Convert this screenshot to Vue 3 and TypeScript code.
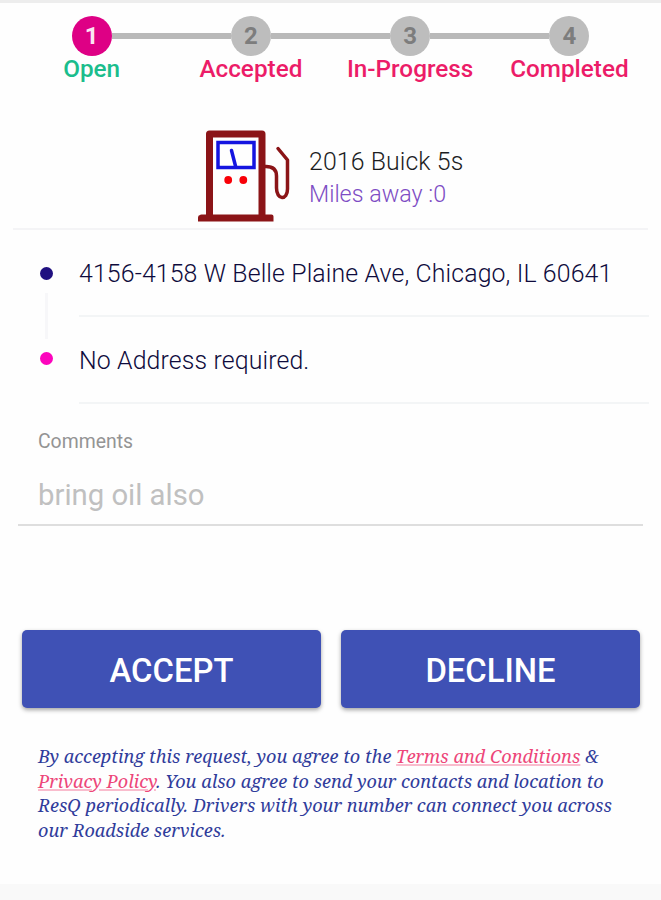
<script setup lang="ts">
interface Step {
  id: number
  label: string
  active: boolean
}

const steps: Step[] = [
  { id: 1, label: 'Open', active: true },
  { id: 2, label: 'Accepted', active: false },
  { id: 3, label: 'In-Progress', active: false },
  { id: 4, label: 'Completed', active: false },
]
</script>

<template>
  <main class="screen">
    <ol class="stepper">
      <li v-for="step in steps" :key="step.id" class="step" :class="{ active: step.active }">
        <div class="track">
          <span class="rail"></span>
          <span class="circle">{{ step.id }}</span>
          <span class="rail"></span>
        </div>
        <span class="step-label">{{ step.label }}</span>
      </li>
    </ol>

    <section class="vehicle">
      <svg class="pump" width="94" height="94" viewBox="0 0 94 94" fill="none">
        <path d="M11.500 88V5H64V88" stroke="#8b1417" stroke-width="7" stroke-linejoin="round" />
        <path d="M2 86Q2 85.500 3.500 85.500H73.500Q75.500 85.500 75.500 87.500V92.500H0V88.500Q0 86 2 86Z" fill="#8b1417" />
        <path d="M64 37.500H68C75 37.500 78.500 41 78.500 47V59C78.500 71.500 89.500 71.500 89.500 60V31L80 19.500" stroke="#8b1417" stroke-width="3.500" stroke-linejoin="round" stroke-linecap="round" />
        <rect x="20" y="13.500" width="36" height="25" stroke="#1414e0" stroke-width="3.500" />
        <path d="M33.500 21.500L37.500 37" stroke="#1414e0" stroke-width="3.500" stroke-linecap="round" />
        <circle cx="30.200" cy="51" r="3.900" fill="#f80008" />
        <circle cx="45.300" cy="51" r="3.900" fill="#f80008" />
      </svg>
      <div class="vehicle-text">
        <h1>2016 Buick 5s</h1>
        <p>Miles away :0</p>
      </div>
    </section>

    <section class="route">
      <div class="markers">
        <span class="dot from"></span>
        <span class="connector"></span>
        <span class="dot to"></span>
      </div>
      <div class="stops">
        <div class="stop pickup"><span>4156-4158 W Belle Plaine Ave, Chicago, IL 60641</span></div>
        <div class="stop dropoff"><span>No Address required.</span></div>
      </div>
    </section>

    <section class="comments">
      <label for="comments">Comments</label>
      <input id="comments" type="text" placeholder="bring oil also" />
    </section>

    <div class="actions">
      <button type="button">ACCEPT</button>
      <button type="button">DECLINE</button>
    </div>

    <p class="terms">
      <span class="line">By accepting this request, you agree to the <a>Terms and Conditions</a> &amp;</span>
      <span class="line"><a>Privacy Policy</a>. You also agree to send your contacts and location to</span>
      <span class="line">ResQ periodically. Drivers with your number can connect you across</span>
      <span class="line">our Roadside services.</span>
    </p>
    <footer class="bottom"></footer>
  </main>
</template>

<style>
body {
  background: #fefefe;
}
</style>

<style scoped>
* {
  box-sizing: border-box;
  margin: 0;
  padding: 0;
}
.screen {
  display: flex;
  flex-direction: column;
  width: 661px;
  height: 900px;
  overflow: hidden;
  border-top: 3px solid #ededed;
  background: #fefefe;
  font-family: Roboto, "Liberation Sans", sans-serif;
}
.stepper {
  display: grid;
  grid-template-columns: repeat(4, 1fr);
  height: 113px;
  padding: 12px 12px 0;
  list-style: none;
}
.step {
  display: flex;
  flex-direction: column;
  align-items: center;
}
.track {
  display: flex;
  align-items: center;
  width: 100%;
  height: 42px;
}
.rail {
  flex: 1;
  height: 6px;
  background: #b9b9b9;
}
.step:first-child .rail:first-child,
.step:last-child .rail:last-child {
  background: transparent;
}
.circle {
  width: 40px;
  height: 40px;
  border-radius: 50%;
  background: #bdbdbd;
  color: #7d7d7d;
  font-size: 24px;
  font-weight: 700;
  line-height: 41px;
  text-align: center;
}
.active .circle {
  background: #de0085;
  color: #fbe4f2;
}
.step-label {
  color: #ec1c68;
  font-size: 24.3px;
  font-weight: 500;
  line-height: 28px;
  white-space: nowrap;
  margin-top: -2px;
}
.active .step-label {
  color: #1bbd8c;
}
.vehicle {
  display: flex;
  height: 114px;
  margin: 0 13px;
  padding: 13px 0 0 185px;
  border-bottom: 2px solid #f4f4f6;
}
.pump {
  flex: none;
}
.vehicle-text {
  padding: 17px 0 0 17px;
  white-space: nowrap;
}
h1 {
  color: #1c1d1f;
  font-size: 24.85px;
  font-weight: 300;
  letter-spacing: 0.1px;
  line-height: 32px;
}
.vehicle-text p {
  color: #7d4cc4;
  font-size: 23.3px;
  font-weight: 300;
  line-height: 32px;
}
.route {
  display: flex;
  padding-left: 39px;
}
.markers {
  display: flex;
  flex-direction: column;
  align-items: center;
  width: 14px;
  padding-top: 37px;
}
.dot {
  width: 13px;
  height: 13px;
  border-radius: 50%;
}
.from {
  background: #201080;
}
.to {
  background: #fc05bd;
}
.connector {
  width: 3px;
  height: 46px;
  margin: 13px 0;
  background: #f7f7f9;
}
.stops {
  flex: 1;
  padding: 0 12px 0 26px;
}
.stop {
  display: flex;
  align-items: center;
  height: 87px;
  padding-top: 2px;
  border-bottom: 2px solid #f3f5f6;
  color: #0e0b3c;
  font-size: 24.85px;
  font-weight: 300;
  letter-spacing: 0.13px;
  white-space: nowrap;
}
.comments {
  display: flex;
  flex-direction: column;
  height: 122px;
  margin: 0 18px;
  padding: 25px 20px 0;
  border-bottom: 2px solid #dedede;
}
.comments label {
  color: #949494;
  font-size: 19.4px;
  line-height: 26px;
}
.comments input {
  height: 40px;
  margin-top: 20px;
  border: 0;
  outline: 0;
  background: transparent;
  font-family: inherit;
  font-size: 29.3px;
}
.comments input::placeholder {
  color: #c0c0c0;
  opacity: 1;
}
.actions {
  display: grid;
  grid-template-columns: 1fr 1fr;
  gap: 20px;
  padding: 104px 21px 0 22px;
}
button {
  height: 78px;
  padding-top: 3px;
  border: 0;
  border-radius: 5px;
  background: #3f51b5;
  box-shadow: 0 2px 4px rgba(0, 0, 0, 0.36);
  color: #fff;
  font-family: inherit;
  font-size: 32.8px;
  font-weight: 500;
}
.terms {
  padding: 36px 0 0 38px;
  color: #303c9b;
  font-family: "Noto Serif", "DejaVu Serif Condensed", "DejaVu Serif", serif;
  font-size: 18.12px;
  font-style: italic;
}
.line {
  display: block;
  height: 24.7px;
  line-height: 24.7px;
  white-space: nowrap;
}
.terms a {
  color: #ed4679;
  text-decoration: underline;
  text-decoration-color: #f9bccd;
  text-decoration-thickness: 2px;
}
.bottom {
  flex: none;
  height: 16px;
  margin-top: auto;
  background: #f9f9f9;
}
</style>
